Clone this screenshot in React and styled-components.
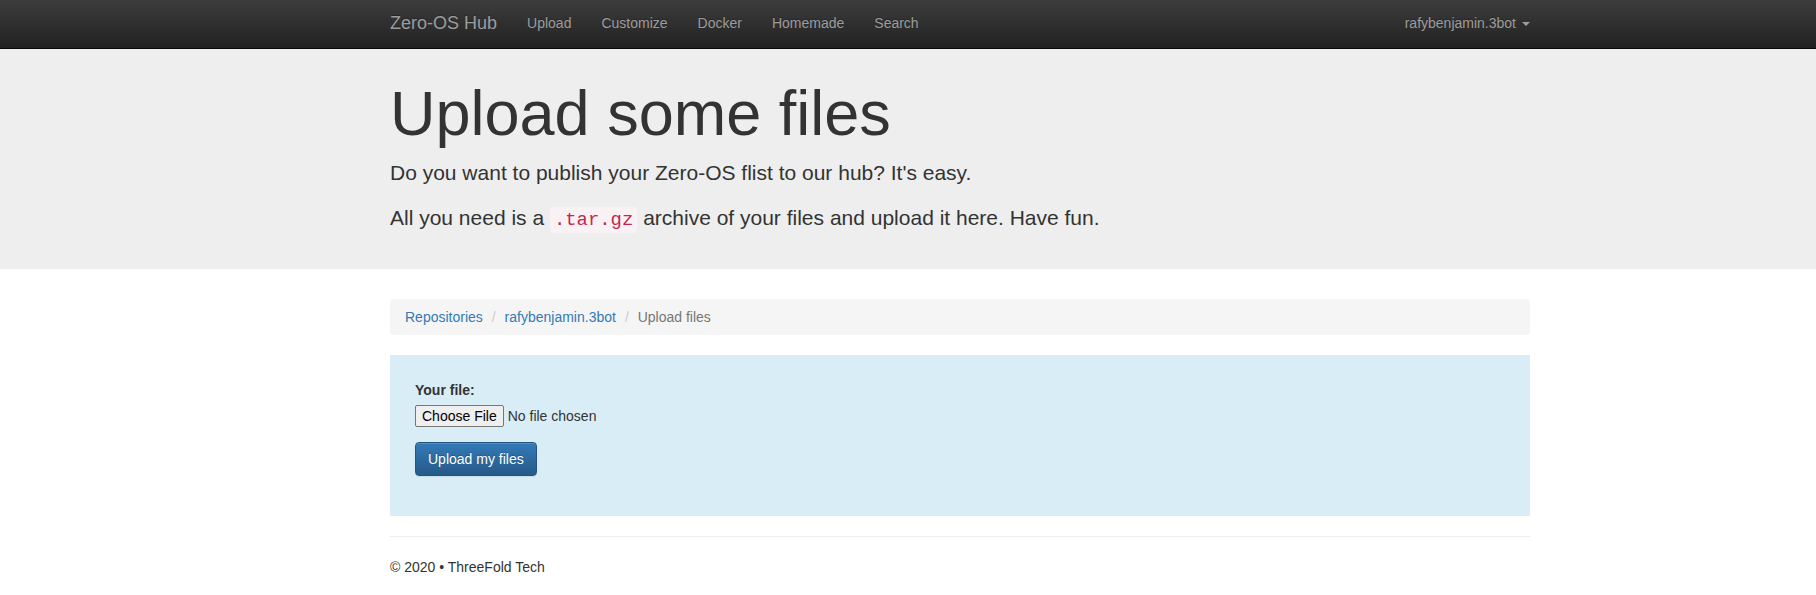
import React from 'react';
import styled, { createGlobalStyle } from 'styled-components';

const GlobalStyle = createGlobalStyle`
  html {
    overflow: hidden;
  }
  body {
    margin: 0;
    width: 1920px;
    font-family: "Liberation Sans", Arial, sans-serif;
    font-size: 14px;
    line-height: 1.42857143;
    color: #333;
    background: #fff;
  }
  * {
    box-sizing: border-box;
  }
`;

const Container = styled.div`
  width: 1140px;
  margin: 0 auto;
`;

const Navbar = styled.nav`
  height: 49px;
  background-image: linear-gradient(to bottom, #3c3c3c 0, #222 100%);
  border-bottom: 1px solid #080808;
`;

const NavInner = styled(Container)`
  display: flex;
  justify-content: space-between;
  align-items: flex-start;
`;

const NavGroup = styled.div`
  display: flex;
  margin: ${p => (p.$right ? '0 -15px 0 0' : '0')};
`;

const Brand = styled.a`
  font-size: 18px;
  line-height: 20px;
  padding: 13px 15px 15px 0;
  color: #9d9d9d;
  text-decoration: none;
  text-shadow: 0 -1px 0 rgba(0, 0, 0, 0.25);
`;

const NavLink = styled.a`
  display: flex;
  align-items: center;
  padding: 13px 15px 15px;
  line-height: 20px;
  color: #9d9d9d;
  text-decoration: none;
  text-shadow: 0 -1px 0 rgba(0, 0, 0, 0.25);
`;

const Caret = styled.span`
  display: inline-block;
  width: 0;
  height: 0;
  margin-left: 6px;
  margin-top: 1px;
  border-top: 4px solid #9d9d9d;
  border-right: 4px solid transparent;
  border-left: 4px solid transparent;
`;

const Jumbotron = styled.header`
  background: #eee;
  padding: 30px 0 21px;
  margin-bottom: 30px;
`;

const Title = styled.h1`
  font-size: 63px;
  font-weight: 500;
  line-height: 1.1;
  margin: 0 0 10px;
  color: #333;
`;

const Lead = styled.p`
  font-size: 21px;
  font-weight: 200;
  line-height: 30px;
  margin: 0 0 15px;
`;

const Code = styled.code`
  font-family: "Liberation Mono", "Courier New", monospace;
  font-size: 90%;
  line-height: 1;
  padding: 2px 4px;
  color: #c7254e;
  background-color: #f9f2f4;
  border-radius: 4px;
`;

const Breadcrumb = styled.ol`
  display: flex;
  gap: 4px;
  list-style: none;
  margin: 0 0 20px;
  padding: 8px 15px;
  background: #f5f5f5;
  border-radius: 4px;
`;

const Crumb = styled.li`
  color: #777;

  & + &::before {
    content: "/\\00a0";
    padding: 0 5px;
    color: #ccc;
  }

  a {
    color: #337ab7;
    text-decoration: none;
  }
`;

const UploadPanel = styled.section`
  background: #d9edf7;
  padding: 25px;
`;

const FormGroup = styled.div`
  margin-bottom: 15px;
`;

const Label = styled.label`
  display: inline-block;
  margin-bottom: 5px;
  font-weight: bold;
`;

const FileInput = styled.input`
  display: block;
  font-family: inherit;
  font-size: 14px;
  line-height: 18px;
  color: #333;

  &::file-selector-button {
    font-family: inherit;
    font-size: 14px;
    line-height: 18px;
    padding: 1px 6px;
    margin-right: 4px;
    border: 1px solid #767676;
    border-radius: 2px;
    background: #efefef;
    color: #000;
  }
`;

const PrimaryButton = styled.button`
  display: inline-block;
  margin-bottom: 15px;
  padding: 6px 12px;
  font-family: inherit;
  font-size: 14px;
  line-height: 20px;
  color: #fff;
  background-image: linear-gradient(to bottom, #337ab7 0, #265a88 100%);
  border: 1px solid #245580;
  border-radius: 4px;
  text-shadow: 0 -1px 0 rgba(0, 0, 0, 0.2);
  box-shadow: inset 0 1px 0 rgba(255, 255, 255, 0.15), 0 1px 1px rgba(0, 0, 0, 0.075);
  cursor: pointer;
`;

const Rule = styled.hr`
  margin: 20px 0;
  border: 0;
  border-top: 1px solid #eee;
`;

const FooterText = styled.p`
  margin: 0 0 10px;
`;

const navItems = ['Upload', 'Customize', 'Docker', 'Homemade', 'Search'];

export default function App() {
  return (
    <>
      <GlobalStyle />
      <Navbar>
        <NavInner>
          <NavGroup>
            <Brand href="#">Zero-OS Hub</Brand>
            {navItems.map(item => (
              <NavLink key={item} href="#">{item}</NavLink>
            ))}
          </NavGroup>
          <NavGroup $right>
            <NavLink href="#">
              rafybenjamin.3bot
              <Caret />
            </NavLink>
          </NavGroup>
        </NavInner>
      </Navbar>

      <Jumbotron>
        <Container>
          <Title>Upload some files</Title>
          <Lead>Do you want to publish your Zero-OS flist to our hub? It's easy.</Lead>
          <Lead>
            All you need is a <Code>.tar.gz</Code> archive of your files and upload it here. Have fun.
          </Lead>
        </Container>
      </Jumbotron>

      <Container>
        <Breadcrumb>
          <Crumb><a href="#">Repositories</a></Crumb>
          <Crumb><a href="#">rafybenjamin.3bot</a></Crumb>
          <Crumb>Upload files</Crumb>
        </Breadcrumb>

        <UploadPanel>
          <form onSubmit={e => e.preventDefault()}>
            <FormGroup>
              <Label htmlFor="file">Your file:</Label>
              <FileInput type="file" id="file" name="file" />
            </FormGroup>
            <PrimaryButton type="submit">Upload my files</PrimaryButton>
          </form>
        </UploadPanel>

        <Rule />
        <footer>
          <FooterText>© 2020 • ThreeFold Tech</FooterText>
        </footer>
      </Container>
    </>
  );
}
